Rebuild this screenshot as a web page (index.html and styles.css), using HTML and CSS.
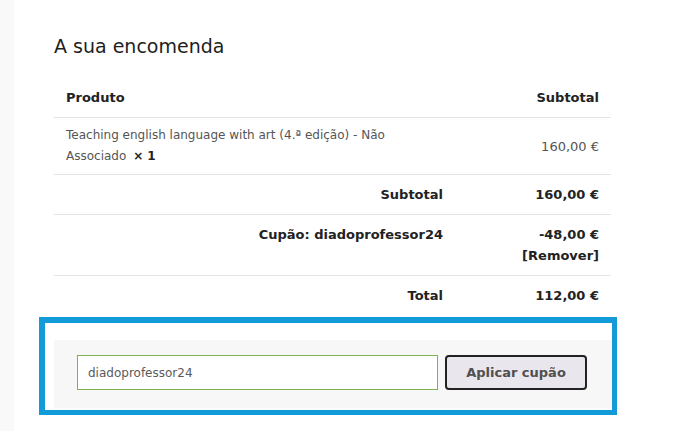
FILE: index.html
```html
<!DOCTYPE html>
<html lang="pt">
<head>
<meta charset="utf-8">
<title>A sua encomenda</title>
<link rel="stylesheet" href="styles.css">
</head>
<body>
<div class="page">
  <div class="strip"></div>
  <main class="main">
    <h3 class="title">A sua encomenda</h3>
    <table class="review">
      <thead>
        <tr>
          <th class="name">Produto</th>
          <th class="amount">Subtotal</th>
        </tr>
      </thead>
      <tbody>
        <tr class="item">
          <td class="name"><span>Teaching english language with art (4.ª edição) - Não</span> <span>Associado</span> <strong class="qty">× 1</strong></td>
          <td class="amount light">160,00 €</td>
        </tr>
      </tbody>
      <tfoot>
        <tr>
          <th class="label">Subtotal</th>
          <td class="amount strong">160,00 €</td>
        </tr>
        <tr class="coupon">
          <th class="label">Cupão: diadoprofessor24</th>
          <td class="amount strong">-48,00 €<br>[Remover]</td>
        </tr>
        <tr class="last">
          <th class="label">Total</th>
          <td class="amount strong">112,00 €</td>
        </tr>
      </tfoot>
    </table>
    <div class="highlight">
      <form class="coupon-form">
        <input class="coupon-input" type="text" value="diadoprofessor24">
        <button class="coupon-btn" type="button">Aplicar cupão</button>
      </form>
    </div>
  </main>
</div>
</body>
</html>
```

FILE: styles.css
```css
html, body {
  margin: 0;
  padding: 0;
  background: #ffffff;
}
body {
  font-family: "DejaVu Sans", "Liberation Sans", sans-serif;
  color: #222;
}
.page {
  display: flex;
  min-height: 431px;
}
.strip {
  width: 14px;
  flex: none;
  background: #f9f9f9;
}
.main {
  width: 578px;
  padding: 34px 0 0 25px;
}
.title {
  margin: 0 0 20px 15px;
  font-size: 19px;
  font-weight: 500;
  line-height: 24px;
  color: #1e1e1e;
}
.review {
  margin-left: 15px;
  width: 557px;
  border-collapse: collapse;
  font-size: 12px;
}
.review th, .review td {
  padding: 9px 12px;
  line-height: 21px;
  vertical-align: top;
}
.review thead th {
  font-size: 13px;
  font-weight: 600;
  color: #222;
  border-bottom: 1px solid #e4e4e4;
}
.review .name {
  text-align: left;
}
.review .amount {
  text-align: right;
  width: 132px;
}
.review tbody td {
  color: #555;
  border-bottom: 1px solid #e4e4e4;
  padding-top: 7px;
  padding-bottom: 7px;
}
.review tbody td.amount {
  vertical-align: middle;
  font-size: 13px;
}
.review .qty {
  color: #222;
  font-weight: 700;
  margin-left: 3px;
}
.review tfoot th, .review tfoot td {
  border-bottom: 1px solid #e4e4e4;
  font-weight: 700;
  font-size: 13px;
  color: #222;
}
.review tfoot .label {
  text-align: right;
}
.review tfoot tr.last th, .review tfoot tr.last td {
  border-bottom: none;
}
.highlight {
  margin-top: 2px;
  border: 5px solid #139bd9;
  border-top-width: 6px;
  border-left-width: 6px;
  padding: 17px 0 2px 9px;
  background: #fff;
}
.coupon-form {
  display: flex;
  gap: 7px;
  align-items: center;
  background: #f7f7f7;
  padding: 15px 0 18px 23px;
  margin: 0;
}
.coupon-input {
  box-sizing: border-box;
  width: 361px;
  height: 35px;
  border: 1px solid #7cb24f;
  background: #fff;
  padding: 0 10px;
  font-family: inherit;
  font-size: 12px;
  color: #5a5a5a;
  outline: none;
  margin: 0;
}
.coupon-btn {
  box-sizing: border-box;
  width: 142px;
  height: 35px;
  border: 2px solid #222;
  border-radius: 4px;
  background: #e9e6ed;
  font-family: inherit;
  font-size: 13px;
  font-weight: 700;
  color: #505050;
  margin: 0;
  padding: 0;
}
```
